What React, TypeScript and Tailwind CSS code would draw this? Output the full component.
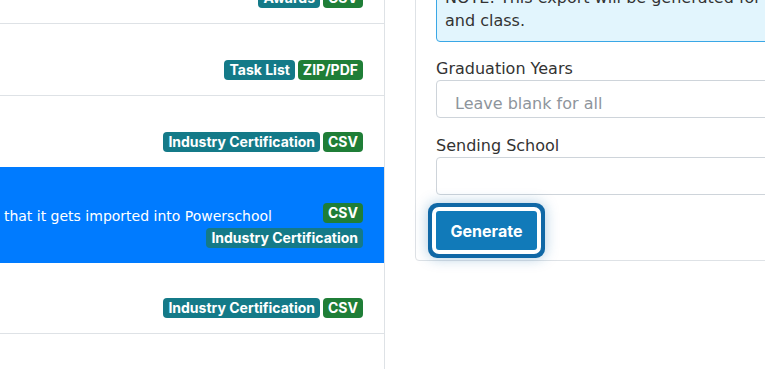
import React from "react";

const bodyFont = { fontFamily: "'DejaVu Sans', 'Noto Sans', sans-serif" };
const badgeFont = { fontFamily: "Inter, 'Noto Sans', sans-serif" };

function Badge({ kind, children }: { kind: "teal" | "green"; children: React.ReactNode }) {
  return (
    <span
      style={badgeFont}
      className={
        "inline-flex h-[20px] items-center rounded-[4px] px-[5px] text-[14px] font-bold leading-none text-white whitespace-nowrap " +
        (kind === "teal" ? "bg-[#147a88]" : "bg-[#1f7e37]")
      }
    >
      {children}
    </span>
  );
}

function Row({ h, border = true, children }: { h: string; border?: boolean; children: React.ReactNode }) {
  return (
    <div
      className={
        "flex shrink-0 items-end justify-end gap-[3px] pb-[15px] pr-[21px] " +
        h +
        (border ? " border-b border-[#dee2e6]" : "")
      }
    >
      {children}
    </div>
  );
}

export default function App() {
  return (
    <div className="flex h-[369px] w-[765px] overflow-hidden bg-white text-[#333]" style={bodyFont}>
      <div className="flex w-[385px] shrink-0 flex-col border-r border-[#dee2e6]">
        <Row h="h-[24px]">
          <Badge kind="teal">Awards</Badge>
          <Badge kind="green">CSV</Badge>
        </Row>
        <Row h="h-[72px]">
          <Badge kind="teal">Task List</Badge>
          <Badge kind="green">ZIP/PDF</Badge>
        </Row>
        <Row h="h-[71px]" border={false}>
          <Badge kind="teal">Industry Certification</Badge>
          <Badge kind="green">CSV</Badge>
        </Row>
        <div className="flex h-[96px] shrink-0 flex-col items-end gap-[5px] overflow-hidden bg-[#007bff] pr-[21px] pt-[36px]">
          <div className="flex h-[20px] w-full items-start justify-end">
            <div className="mr-[51px] whitespace-nowrap text-[14px] leading-[26px] text-white">
              Export industry certification data formatted so that it gets imported into Powerschool
            </div>
            <Badge kind="green">CSV</Badge>
          </div>
          <Badge kind="teal">Industry Certification</Badge>
        </div>
        <Row h="h-[71px]">
          <Badge kind="teal">Industry Certification</Badge>
          <Badge kind="green">CSV</Badge>
        </Row>
        <div className="flex-1" />
      </div>

      <div className="min-w-0 flex-1 pl-[30px]">
        <div className="-mt-[48px] w-[520px] rounded-b-[4px] border border-[#dee2e6] px-[20px] pb-[10px] pt-[20px]">
          <div className="rounded-[4px] border border-[#3aa7e6] bg-[#e2f5fd] px-[8px] pb-[9px] pt-[12px] text-[16px] leading-[23px] text-[#333]">
            <div className="whitespace-nowrap">NOTE: This export will be generated for the currently selected school year</div>
            <div>and class.</div>
          </div>
          <div className="mt-[15px] text-[16px] leading-[23px] text-[#333]">Graduation Years</div>
          <div className="flex h-[38px] items-center rounded-[4px] border border-[#ced4da] pl-[18px] pt-[10px] text-[16px] text-[#8e959c]">
            Leave blank for all
          </div>
          <div className="mt-[16px] text-[16px] leading-[23px] text-[#333]">Sending School</div>
          <div className="h-[38px] rounded-[4px] border border-[#ced4da]" />
          <div className="mt-[16px] flex">
            <button
              style={badgeFont}
              className="h-[39px] w-[101px] rounded-[3px] bg-[#117ab9] text-[16px] font-bold text-white shadow-[0_0_0_4px_#ffffff,0_0_0_8px_#1068a6,0_0_14px_8px_rgba(16,104,166,0.35)]"
            >
              Generate
            </button>
          </div>
        </div>
      </div>
    </div>
  );
}
